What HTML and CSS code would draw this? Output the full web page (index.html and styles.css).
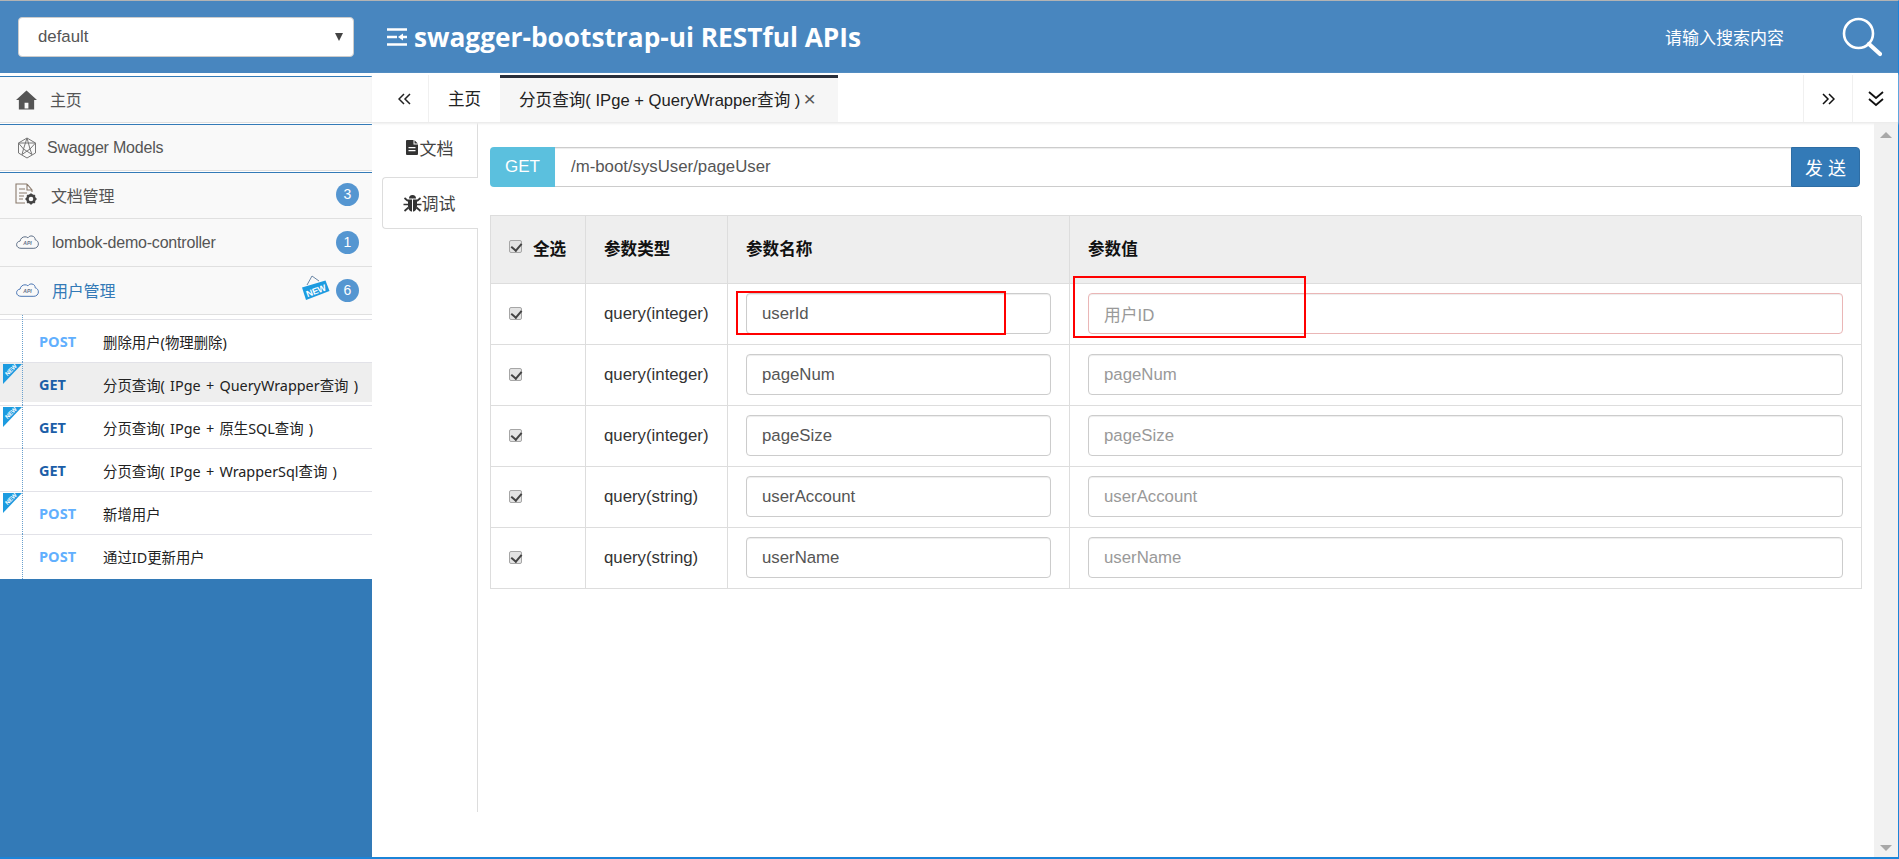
FILE: index.html
```html
<!DOCTYPE html>
<html lang="zh">
<head>
<meta charset="utf-8">
<title>swagger-bootstrap-ui RESTful APIs</title>
<link rel="stylesheet" href="styles.css">
</head>
<body>
<div class="app">
  <header class="topbar">
    <div class="group-select"><span>default</span><i class="caret"></i></div>
    <svg class="menu-icon" viewBox="0 0 22 18"><path d="M1 1.500h20M1 9h10M16.500 9H21M1 16.500h20" stroke="#fff" stroke-width="2.400" fill="none"/><path d="M12 9l5-3.500v7z" fill="#fff"/></svg>
    <h1 class="title">swagger-bootstrap-ui RESTful APIs</h1>
    <div class="search-text">请输入搜索内容</div>
    <svg class="search-icon" viewBox="0 0 40 40"><circle cx="16.500" cy="16.500" r="14.500" fill="none" stroke="#fff" stroke-width="2.600"/><path d="M27 27l11 10" stroke="#fff" stroke-width="4.200" stroke-linecap="round"/></svg>
  </header>
  <div class="body">
    <aside class="sidebar">
      <div class="nav-row nav-top">
        <svg class="ic-home" viewBox="0 0 22 20"><path d="M11 0L0 10h3v10h16V10h3zM9 13h4v6H9z" fill="#555" fill-rule="evenodd"/></svg>
        <span class="nav-label nav-cjk">主页</span>
      </div>
      <div class="nav-row nav-top">
        <svg class="ic-hex" viewBox="0 0 20 22"><g fill="none" stroke="#777" stroke-width="1"><path d="M10 1l8.500 5v10L10 21l-8.500-5V6z"/><path d="M10 1l3 11 5.500-6H1.500l5 6 3.500-11M6.500 12L5 17.500l8-5.500M13 12l2 5.500L6.500 12"/></g></svg>
        <span class="nav-label nav-label-models">Swagger Models</span>
      </div>
      <div class="nav-row nav-top nav-doc">
        <svg class="ic-doc" viewBox="0 0 23 22"><path d="M12 1H1v19h9M12 1l5 6v2M12 1v6h5M4 6h6M4 10h8M4 13h5M4 16h4" fill="none" stroke="#8a7a6c" stroke-width="1.100"/><circle cx="16" cy="16" r="3.600" fill="none" stroke="#444" stroke-width="2.600"/><path d="M16 10.500v2M16 19.500v2M10.500 16h2M19.500 16h2M12.200 12.200l1.400 1.400M18.400 18.400l1.400 1.400M12.200 19.800l1.400-1.400M18.400 13.600l1.400-1.400" stroke="#444" stroke-width="1.800"/></svg>
        <span class="nav-label nav-cjk">文档管理</span>
        <span class="badge">3</span>
      </div>
      <div class="nav-row">
        <svg class="ic-cloud" viewBox="0 0 23 14"><path d="M5 13.300C2.500 13.300.6 11.800.6 9.700c0-2 1.500-3.400 3.500-3.600C4.500 3.500 6.500 1.800 9 1.800c1.200 0 2 .3 2.900 1C13 1.400 14.500.7 16 1c2 .3 3.200 1.800 3.200 3.800 1.900.5 3.200 2 3.200 4.100 0 2.500-2 4.400-4.500 4.400z" fill="none" stroke="#5f7088" stroke-width="1"/><text x="11.500" y="10.300" class="api-text">API</text></svg>
        <span class="nav-label">lombok-demo-controller</span>
        <span class="badge">1</span>
      </div>
      <div class="nav-row nav-open">
        <svg class="ic-cloud" viewBox="0 0 23 14"><path d="M5 13.300C2.500 13.300.6 11.800.6 9.700c0-2 1.500-3.400 3.500-3.600C4.500 3.500 6.500 1.800 9 1.800c1.200 0 2 .3 2.900 1C13 1.400 14.500.7 16 1c2 .3 3.200 1.800 3.200 3.800 1.900.5 3.200 2 3.200 4.100 0 2.500-2 4.400-4.500 4.400z" fill="none" stroke="#4c77b5" stroke-width="1"/><text x="11.500" y="10.300" class="api-text">API</text></svg>
        <span class="nav-label nav-cjk">用户管理</span>
        <svg class="ic-new" viewBox="0 0 29 28"><path d="M6 11L11 2l7 5" fill="none" stroke="#6b87a6" stroke-width="1"/><path d="M1 13.500L24.500 6.500l4 10.500L5 26z" fill="#1c9be0"/><text x="14.700" y="20" transform="rotate(-20 14.700 16)" class="new-text">NEW</text></svg>
        <span class="badge">6</span>
      </div>
      <ul class="api-list">
        <li class="api-row"><span class="method post">POST</span><span class="api-desc">删除用户(物理删除)</span></li>
        <li class="api-row api-active"><i class="ribbon"><b>NEW</b></i><span class="method get">GET</span><span class="api-desc">分页查询( IPge + QueryWrapper查询 )</span></li>
        <li class="api-row"><i class="ribbon"><b>NEW</b></i><span class="method get">GET</span><span class="api-desc">分页查询( IPge + 原生SQL查询 )</span></li>
        <li class="api-row"><span class="method get">GET</span><span class="api-desc">分页查询( IPge + WrapperSql查询 )</span></li>
        <li class="api-row"><i class="ribbon"><b>NEW</b></i><span class="method post">POST</span><span class="api-desc">新增用户</span></li>
        <li class="api-row"><span class="method post">POST</span><span class="api-desc">通过ID更新用户</span></li>
      </ul>
    </aside>
    <main class="main">
      <nav class="tabs">
        <div class="tab-ctl tab-prev">
          <svg class="chev" viewBox="0 0 13 12"><path d="M6 1L1 6l5 5M12 1L7 6l5 5" fill="none" stroke="#222" stroke-width="1.500"/></svg>
        </div>
        <div class="tab-home">主页</div>
        <div class="tab-current"><span>分页查询( IPge + QueryWrapper查询 )</span><span class="tab-x">×</span></div>
        <div class="tab-fill"></div>
        <div class="tab-ctl tab-next">
          <svg class="chev" viewBox="0 0 13 12"><path d="M1 1l5 5-5 5M7 1l5 5-5 5" fill="none" stroke="#111" stroke-width="1.500"/></svg>
        </div>
        <div class="tab-ctl tab-down">
          <svg class="chev-down" viewBox="0 0 16 16"><path d="M1 1l7 6 7-6M1 8l7 6 7-6" fill="none" stroke="#111" stroke-width="1.800"/></svg>
        </div>
      </nav>
      <div class="content">
        <div class="side-tabs">
          <div class="side-tab side-tab-doc">
            <svg class="ic-file" viewBox="0 0 12 15"><path d="M1 0h6.500v4.500H12V14a1 1 0 0 1-1 1H1a1 1 0 0 1-1-1V1a1 1 0 0 1 1-1zM8.500 0.300L11.800 3.500H8.500zM2.500 7v1.300h7V7zM2.500 10v1.300h7V10z" fill="#333" fill-rule="evenodd"/></svg><span>文档</span>
          </div>
          <div class="side-tab side-tab-on">
            <svg class="ic-bug" viewBox="0 0 19 19"><path d="M6 5.500a3.500 3.500 0 0 1 7 0zM5 6.500h4v12c-2.500 0-4-2.500-4-6zM10 6.500h4v6c0 3.500-1.500 6-4 6z" fill="#333"/><path d="M5 8L1.500 5M14 8l3.500-3M5 11.500H.5M14 11.500h4.500M5.500 14.500L1.500 18M13.500 14.500l4 3.500" stroke="#333" stroke-width="1.700"/></svg><span>调试</span>
          </div>
          <div class="side-rest"></div>
        </div>
        <section class="panel">
          <div class="url-bar">
            <span class="url-method">GET</span>
            <span class="url-path">/m-boot/sysUser/pageUser</span>
            <span class="url-send">发 送</span>
          </div>
          <div class="params">
            <div class="p-cell p-head p-check"><input class="cb" type="checkbox" checked><b>全选</b></div>
            <div class="p-cell p-head"><b>参数类型</b></div>
            <div class="p-cell p-head"><b>参数名称</b></div>
            <div class="p-cell p-head p-last"><b>参数值</b></div>

            <div class="p-cell p-check"><input class="cb" type="checkbox" checked></div>
            <div class="p-cell">query(integer)</div>
            <div class="p-cell p-field"><div class="field">userId</div><i class="mark mark-name"></i></div>
            <div class="p-cell p-field p-last"><div class="field field-ph field-req">用户ID</div><i class="mark mark-value"></i></div>

            <div class="p-cell p-check"><input class="cb" type="checkbox" checked></div>
            <div class="p-cell">query(integer)</div>
            <div class="p-cell p-field"><div class="field">pageNum</div></div>
            <div class="p-cell p-field p-last"><div class="field field-ph">pageNum</div></div>

            <div class="p-cell p-check"><input class="cb" type="checkbox" checked></div>
            <div class="p-cell">query(integer)</div>
            <div class="p-cell p-field"><div class="field">pageSize</div></div>
            <div class="p-cell p-field p-last"><div class="field field-ph">pageSize</div></div>

            <div class="p-cell p-check"><input class="cb" type="checkbox" checked></div>
            <div class="p-cell">query(string)</div>
            <div class="p-cell p-field"><div class="field">userAccount</div></div>
            <div class="p-cell p-field p-last"><div class="field field-ph">userAccount</div></div>

            <div class="p-cell p-check"><input class="cb" type="checkbox" checked></div>
            <div class="p-cell">query(string)</div>
            <div class="p-cell p-field"><div class="field">userName</div></div>
            <div class="p-cell p-field p-last"><div class="field field-ph">userName</div></div>
          </div>
        </section>
        <div class="scrollbar"><i class="arrow-up"></i><i class="arrow-down"></i></div>
      </div>
    </main>
  </div>
</div>
</body>
</html>
```
FILE: styles.css
```css
* { box-sizing: border-box; }
html, body { margin: 0; padding: 0; height: 100%; overflow: hidden; }
body { font-family: "Liberation Sans", "Noto Sans CJK SC", sans-serif; font-size: 16px; color: #333; background: #fff; }
ul { margin: 0; padding: 0; list-style: none; }
h1 { margin: 0; }

.app { width: 1899px; height: 859px; display: flex; flex-direction: column; border-top: 1px solid #b3b3b3; border-right: 1px solid #1b84d8; border-bottom: 2px solid #1b84d8; }

.topbar { height: 72px; flex: none; background: #4886bf; display: flex; align-items: center; color: #fff; }
.group-select { width: 336px; height: 40px; margin: 0 0 0 18px; background: #fff; border: 1px solid #ccc; border-radius: 4px; display: flex; align-items: center; justify-content: space-between; padding: 0 10px 0 19px; color: #555; font-size: 16.800px; }
.caret { width: 0; height: 0; border-left: 4px solid transparent; border-right: 4px solid transparent; border-top: 8px solid #444; }
.menu-icon { width: 22px; height: 18px; margin-left: 32px; flex: none; }
.title { margin-left: 6px; font-family: "Open Sans", sans-serif; font-size: 26.250px; font-weight: 700; white-space: nowrap; }
.search-text { margin-left: auto; font-size: 17px; padding-bottom: 2px; }
.search-icon { width: 40px; height: 40px; margin: 0 16px 0 58px; flex: none; }

.body { flex: 1; display: flex; min-height: 0; }

.sidebar { width: 372px; flex: none; background: #337ab7; display: flex; flex-direction: column; padding-top: 3px; background-clip: content-box; }
.nav-row { background: #f9f9f9; display: flex; align-items: center; height: 48px; border-bottom: 1px solid #e0e0e0; padding-left: 15px; color: #555; font-size: 16px; letter-spacing: -.2px; position: relative; }
.nav-top { border-top: 1px solid #337ab7; box-shadow: inset 0 -1px 0 #e0e0e0; border-bottom: 1px solid #fff; padding-bottom: 1px; }
.nav-doc { border-bottom: 1px solid #e0e0e0; box-shadow: none; height: 47px; padding-bottom: 0; }
.nav-open { color: #337ab7; }
.nav-label { margin-left: 13px; }
.nav-cjk { margin-top: -2px; }
.nav-label-models { margin-left: 10px; }
.ic-home { width: 21px; height: 20px; margin-left: 1px; flex: none; }
.ic-hex { width: 20px; height: 22px; margin-left: 2px; flex: none; }
.ic-doc { width: 23px; height: 22px; flex: none; margin-top: -4px; }
.ic-cloud { width: 23px; height: 14px; flex: none; margin-left: 1px; margin-top: -2px; }
.api-text { font: italic 700 5px "Liberation Sans", sans-serif; fill: #5f7088; text-anchor: middle; letter-spacing: 0; }
.ic-new { position: absolute; left: 301px; top: 7px; width: 29px; height: 28px; }
.new-text { font: 700 9px "Liberation Sans", sans-serif; fill: #fff; text-anchor: middle; }
.badge { position: absolute; left: 336px; top: 12px; width: 23px; height: 23px; border-radius: 50%; background: #5596d1; color: #fff; font-size: 14px; letter-spacing: 0; text-align: center; line-height: 23px; }
.nav-doc .badge { top: 10px; }

.api-list { background: #fff; padding: 4px 0 2px; }
.api-row { height: 43px; border-top: 1px solid #e2e2e8; display: flex; align-items: center; position: relative; padding-left: 39px; color: #222; font-size: 14.400px; background: #fff; }
.api-row::before { content: ""; position: absolute; left: 22px; top: -1px; bottom: 0; border-left: 1px dotted #6aa0cd; }
.api-row:first-child::before { top: -5px; }
.api-row:last-child::before { bottom: -2px; }
.api-active { background: linear-gradient(#eee 39px, #fff 39px); }
.method { width: 64px; font-size: 14.500px; font-weight: 700; font-family: "Open Sans", sans-serif; flex: none; }
.post { color: #61affe; }
.get { color: #1b5ea8; }
.api-desc { white-space: nowrap; font-family: "Noto Sans", "Noto Sans CJK SC", sans-serif; word-spacing: 1.500px; }
.ribbon { position: absolute; left: 3px; top: 1px; width: 0; height: 0; border-top: 20px solid #1c9be0; border-right: 19px solid transparent; }
.ribbon b { position: absolute; left: 1px; top: -17px; font: 700 6px "Liberation Sans", sans-serif; color: #fff; transform: rotate(-45deg); display: block; }

.main { flex: 1; display: flex; flex-direction: column; min-width: 0; }
.tabs { height: 50px; flex: none; display: flex; border-bottom: 1px solid #ececec; box-shadow: 0 1px 2px #eee; position: relative; z-index: 1; padding-top: 2px; background: #fff; }
.tab-ctl { display: flex; align-items: center; justify-content: center; border-right: 1px solid #f0f0f0; }
.tab-prev { width: 57px; padding-left: 8px; }
.chev { width: 13px; height: 12px; }
.chev-down { width: 16px; height: 16px; }
.tab-home { width: 71px; display: flex; align-items: center; justify-content: center; color: #222; font-size: 16.600px; padding-bottom: 2px; }
.tab-current { width: 338px; background: #f6f6f6; border-top: 3px solid #2a2f3a; display: flex; align-items: center; padding: 0 0 2px 19px; color: #222; font-size: 16.600px; white-space: nowrap; }
.tab-x { color: #555; font-size: 21px; margin-left: 3px; }
.tab-fill { flex: 1; }
.tab-next { width: 49px; border-left: 1px solid #f0f0f0; border-right: 0; }
.tab-down { width: 46px; border-left: 1px solid #f0f0f0; border-right: 0; }

.content { flex: 1; display: flex; min-height: 0; }
.side-tabs { width: 106px; flex: none; padding-left: 10px; display: flex; flex-direction: column; height: 689px; }
.side-tab { height: 54px; border-right: 1px solid #ddd; display: flex; align-items: center; justify-content: center; font-size: 17px; color: #444; gap: 2px; }
.side-tab-doc { padding-bottom: 5px; }
.side-tab-on { height: 52px; background: #fff; border: 1px solid #ddd; border-right: 0; border-radius: 4px 0 0 4px; position: relative; gap: 0; padding: 0 3px 2px 0; }
.side-rest { flex: 1; border-right: 1px solid #ddd; }
.ic-file { width: 12px; height: 15px; }
.ic-bug { width: 19px; height: 19px; }

.panel { flex: 1; padding: 24px 14px 0 12px; min-width: 0; }
.url-bar { display: flex; height: 40px; }
.url-method { width: 65px; background: #5bc0de; color: #fff; border-radius: 4px 0 0 4px; display: flex; align-items: center; justify-content: center; font-size: 17px; }
.url-path { flex: 1; border: 1px solid #ccc; border-width: 1px 0; box-shadow: inset 0 1px 1px rgba(0,0,0,.075); display: flex; align-items: center; padding-left: 16px; color: #555; font-size: 16.800px; }
.url-send { width: 69px; background: #337ab7; border: 1px solid #2e6da4; border-radius: 0 4px 4px 0; color: #fff; display: flex; align-items: center; justify-content: center; font-size: 18px; }

.params { margin-top: 28px; display: grid; grid-template-columns: 95px 142px 342px 792px; grid-template-rows: 68px repeat(5, 61px); border-top: 1px solid #ddd; border-left: 1px solid #ddd; width: 1371px; }
.p-cell { border-right: 1px solid #ddd; border-bottom: 1px solid #ddd; display: flex; align-items: center; padding: 0 0 1px 18px; color: #333; font-size: 16.800px; position: relative; }
.p-head { background: #eee; color: #111; font-size: 16.600px; padding-bottom: 4px; }
.p-check { padding-left: 18px; gap: 11px; }
.cb { appearance: none; width: 13px; height: 13px; margin: 0; background: #e3e3e3; border: 1px solid #a6a6a6; border-radius: 2px; position: relative; flex: none; }
.cb::after { content: ""; position: absolute; left: 3px; top: 0; width: 5px; height: 8px; border: solid #444; border-width: 0 2px 2px 0; transform: rotate(40deg); }
.p-head .cb { margin-top: -3px; }
.p-field { padding: 0 18px 1px; }
.field { width: 100%; height: 41px; border: 1px solid #ccc; border-radius: 4px; display: flex; align-items: center; padding-left: 15px; color: #555; font-size: 16.800px; box-shadow: inset 0 1px 1px rgba(0,0,0,.075); background: #fff; }
.field-ph { color: #999; }
.field-req { border-color: #eab6b6; }
.mark { position: absolute; border: 2px solid #f00; }
.mark-name { left: 8px; top: 7px; width: 270px; height: 44px; }
.mark-value { left: 3px; top: -8px; width: 233px; height: 62px; }

.scrollbar { width: 24px; flex: none; background: #f1f1f1; position: relative; }
.arrow-up, .arrow-down { position: absolute; left: 6px; width: 0; height: 0; border-left: 6px solid transparent; border-right: 6px solid transparent; }
.arrow-up { top: 9px; border-bottom: 6px solid #a8a8a8; }
.arrow-down { bottom: 6px; border-top: 6px solid #a8a8a8; }
```
